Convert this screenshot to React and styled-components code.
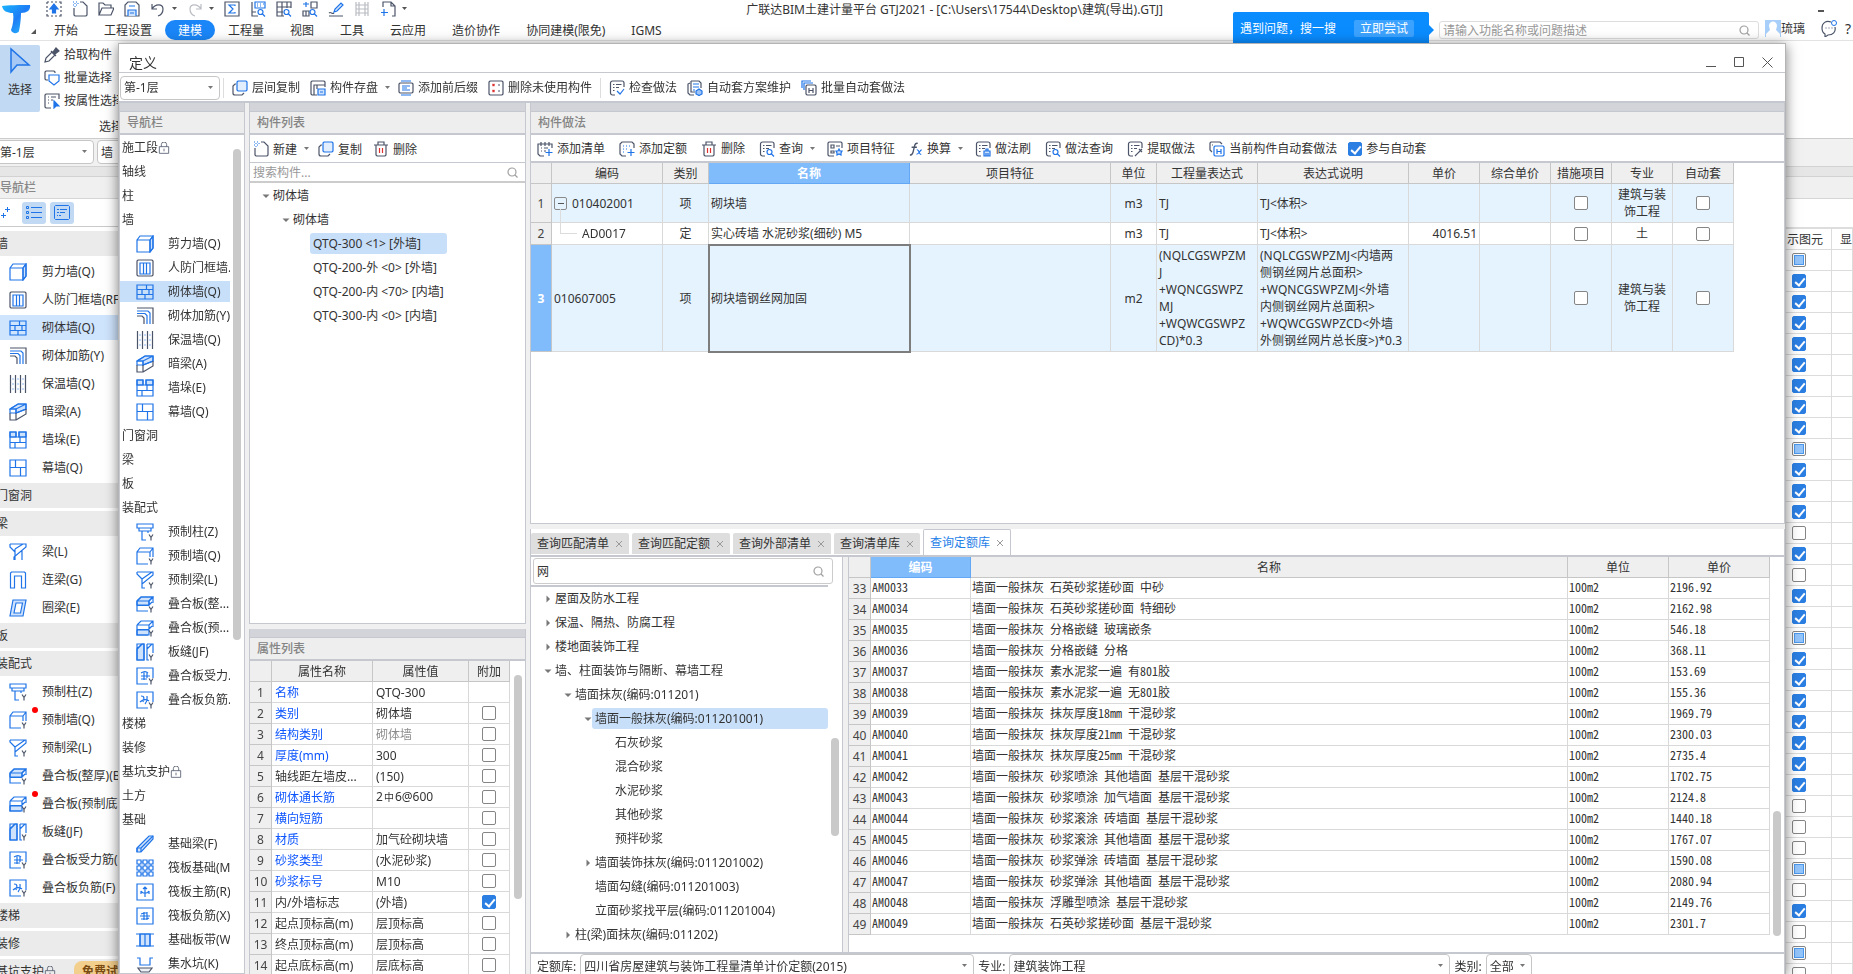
import React from 'react';
import styled, { createGlobalStyle } from 'styled-components';

const line = '#c5c8ce';
const blue = '#1f74e8';
const dark = '#4b5468';
const light = '#cfe2fb';

//icons : [colour, path, fill]
const K = dark;
const B = blue;
const L = light;
const G = '#b9bcc2';
const R = '#e03131';
const yMark = [K, 'M13 11.500l2 3 2-3M15 14.500v3'];
const sheet = [K, 'M6 15H3.500a2 2 0 0 1-2-2V3a2 2 0 0 1 2-2H13a2 2 0 0 1 2 2v4'];
const sheetLines = [K, 'M4 4.500h1.500M7 4.500h5.500M4 7.500h1.500M7 7.500h3M4 10.500h1.500'];

const icons = {
  //navigation
  shear: [[B, 'M14 5l3-4v12l-3 4z', L], [B, 'M1 5h13v12H1zM1 5l3-4h13v12l-3 4M14 5l3-4']],
  door: [[K, 'M2 1h14l1 1v14l-1 1H2l-1-1V2z'], [B, 'M4 4h10v11H4zM7.500 4v11M10.500 4v11']],
  brick: [[B, 'M1 2h16v14H1zM1 6.500h16M1 11.500h16M10.500 2v4.500M6 6.500v5M13 6.500v5M9 11.500V16']],
  rebar: [[K, 'M1 1h16v16M1 9h5l2 2v6'], [B, 'M1 4h11l2 2v11M1 6.500h8l2 2V17']],
  insul: [[K, 'M1.500 0v18M6.500 0v18M11.500 0v18M16.500 0v18'], [B, 'M3.500 4h1M8.500 4h1M13.500 4h1M3.500 9h1M8.500 9h1M13.500 9h1M3.500 14h1M8.500 14h1M13.500 14h1']],
  hidden: [[B, 'M1 6l8-5h8v5L7 10V6z', L], [B, 'M1 6l8-5h8v5L7 10M1 6h6l10-5M7 6v4H1V6'], [K, 'M1 10v7h6v-7M7 17l10-6V6']],
  pier: [[B, 'M1 1h6v5H1zM10 1h7v5h-7z', L], [B, 'M1 1h6v5h3V1h7v16H1zM1 6h16M1 11.500h16M11 6v5.500M6 11.500V17']],
  curtain: [[B, 'M1 1h16v16H1zM1 8.500h16M6.500 1v7.500M11.500 8.500V17']],
  beam: [[B, 'M1 1h16v3L5 14v3M1 1v3l5 5M6 6l8-5M6 6v11M13 8v9']],
  link: [[B, 'M1.500 17V2l1-1h13l1 1v15h-4V5h-7v12z']],
  ring: [[B, 'M4 1h13l-3 16H1z', L], [B, 'M7 4h6.500l-2 10H5z', '#fff']],
  pColumn: [[B, 'M1 1h16v4H1zM3 5v3h12V5M6 8v9h4M12 8v2'], yMark],
  pWall: [[B, 'M12 17H1V5l3-4h13v9M1 5h13l3-4M14 5v5'], yMark],
  pBeam: [[B, 'M1 1h16v3L6 13v4M1 1v2l5 5M6 8l10-7M6 8v9h3'], yMark],
  slabTop: [[B, 'M1 6l4-4h12l-4 4v4H1z', L], [B, 'M1 6l4-4h12v6M1 6h12l4-4M1 6v10h11M1 10.500h12M13 6v4M13 10l3-3'], yMark],
  slabLow: [[B, 'M1 11h12v5H1z', L], [B, 'M1 6l4-4h12v6M1 6h12l4-4M1 6v10h11M1 10.500h12M13 6v4M13 10l3-3'], yMark],
  seam: [[B, 'M1 6l5-5h2v16H1z', L], [B, 'M1 1h7v16H1zM11 1h6v9M11 1v16h2M1 6l5-5M11 6l5-5'], yMark],
  slabBar: [[B, 'M12 17H1V1h16v10M5 6c3-2 5-2 7 0M5 9h9M5 12h6M8 5v8M11 5v6'], yMark],
  slabNeg: [[B, 'M12 17H1V1h16v10M5 5c4 0 3 3 2 6M4 11c3-3 7-3 9-1M11 5c0 3 1 5-2 8'], yMark],
  fBeam: [[B, 'M1 13L13 1h4v3L5 17H1z', L], [B, 'M1 13h4v4M5 13L17 1M1 13v4']],
  raft: [[B, 'M1 1h4v4H1zM7 1h4v4H7zM13 1h4v4h-4zM1 7h4v4H1zM7 7h4v4H7zM13 7h4v4h-4zM1 13h4v4H1zM7 13h4v4H7zM13 13h4v4h-4zM5 3h2M11 3h2M5 9h2M11 9h2M5 15h2M11 15h2M3 5v2M9 5v2M15 5v2M3 11v2M9 11v2M15 11v2']],
  raftMain: [[B, 'M1 1h16v16H1zM9 4v10M5 8c2 3 6 3 8 0M7 6l2-2 2 2M5 8v3M13 8v3']],
  raftNeg: [[B, 'M1 1h16v16H1zM4 9h10M5 7l3-1h3M5 12h6l2-1M8 5v8M11 5v8']],
  strip: [[B, 'M4 3h10v12H4z', L], [B, 'M0 3h18M0 15h18M4 3v12M14 3v12M9 3v12']],
  sump: [[B, 'M1 3h3v7h10V3h3'], [K, 'M2 13h14l-3 4H5z', '#eef0f3']],
  lock: [[K, 'M2 7h14v10H2zM5 7V4a4 4 0 0 1 8 0v3M9 10v4']],

  //toolbars
  layers: [[K, 'M4 4H3L1 6v7a2 2 0 0 0 2 2h7l2-2'], [B, 'M6 1h8l1 1v8l-1 1H6l-1-1V2z', '#e2eefd']],
  save: [[K, 'M7 15H2l-1-1V2l1-1h12l1 1v5M4 15V5h11M7 5v4'], [B, 'M8 9h7v6H8zM10 12h3', L]],
  prefix: [[K, 'M2 3h12l1 1v8l-1 1H2l-1-1V4z'], [B, 'M3 1h10M3 15h10M4 6h8M4 8h5M4 10h8']],
  unused: [[K, 'M2 1h12l1 1v12l-1 1H2l-1-1V2zM10 5h2M10 11h2'], [R, 'M4.500 4l2 2M6.500 4l-2 2M4.500 10l2 2M6.500 10l-2 2']],
  check: [sheet, sheetLines, [B, 'M8 11l3 3 4-5']],
  maintain: [[K, 'M7 15H3l-2-2V4l2-1M4 1h8l2 2v5M4 1v11h4'], [B, 'M6 4h6M6 7h6M6 10h2'], [B, 'M12 9l3 2v3l-3 1.500L9 14v-3z', '#9cc4f6']],
  batch: [[B, 'M1 8V1h9M3 10V3h9'], [K, 'M6 5h8l1 1v8l-1 1H6l-1-1V6zM8 8v5M12 8v5M8 10.500h4']],
  newDoc: [[K, 'M8 1h3l4 4v9l-1 1H3l-1-1V7'], [B, 'M1 1h1M4 1h1M2.500 2.500h1M1 4h1M4 4h1M5.500 2.500h1M2.500 5.500h1']],
  trash: [[K, 'M1 4h14M5 4V1h6v3M3 4v10l1 1h8l1-1V4'], [R, 'M6.500 7v5M9.500 7v5']],
  addList: [[K, 'M7 15H3l-2-2V3h14v4M4 1v4M8 1v4M12 1v4M4 7h1M7 7h4M4 10h1M7 10h2'], [B, 'M12 8v7M8.500 11.500h7']],
  addQuota: [[K, 'M7 15H3l-2-2V3l2-2h10l2 2v4'], [B, 'M4 5h1M7 5h1M10 5h1M4 8h1M7 8h1M4 11h1M12 8v7M8.500 11.500h7']],
  query: [sheet, sheetLines, [B, 'M13 11a2.500 2.500 0 1 0-5 0 2.500 2.500 0 0 0 5 0M12.500 13l2.500 2.500']],
  feature: [[K, 'M7 15H2l-1-1V2l1-1h12l1 1v5M4 4h3v3H4zM9 5h4M4 10h3v2H4z'], [B, 'M12 8l1 2h2l-1 2v2l-2-1-2 1v-2l-1-2h2z', L]],
  brush: [sheet, sheetLines, [B, 'M9 10h6v5H9zM11 10V8h2v2M11 12v3M13 12v3', L]],
  extract: [sheet, sheetLines, [K, 'M8 15l5-5M12 8l3 3M13 10l2-2']],
  current: [[K, 'M3 11L1 9V2l1-1h9l2 2M3 4h1'], [B, 'M6 5h8l1 1v8l-1 1H6l-1-1V6zM8 8v5M12 8v5M8 10.500h4']],

  //quick access
  upload: [[K, 'M1 1h2M5 1h2M9 1h2M13 1h2v2M15 5v2M15 9v2M15 13v2h-2M11 15H9M7 15H5M3 15H1v-2M1 11V9M1 7V5M1 3V1'], [B, 'M8 3l4 5H9.500v4h-3V8H4z', B]],
  open: [[K, 'M1 14V2h4l2 2h6v3M1 14l3-7h12l-3 7z']],
  disk: [[K, 'M1 15V4l3-3h8l3 3v11z'], [B, 'M4 15V9h8v6M5 5h6M6 12h4', L]],
  undo: [[K, 'M2 3v5h5M2 8c3-5 11-6 11 0 0 3-2 6-5 7']],
  redo: [[G, 'M14 3v5H9M14 8C11 3 3 2 3 8c0 3 2 6 5 7']],
  sigma: [[K, 'M1 1h14v14H1z'], [B, 'M11 5V4H5l4 4-4 4h6v-1']],
  calc: [[K, 'M2 1v14h6M2 11h4'], [B, 'M5 1h10v6H5zM7 3h1M10 3h1M13 3h1M7 5h1M10 5h1M13 11a2.500 2.500 0 1 0-5 0 2.500 2.500 0 0 0 5 0M12.500 13l2.500 2.500']],
  gridFind: [[K, 'M8 15H1V1h14v6M1 6h14M1 11h6M6 1v14M11 1v6'], [B, 'M13 11a2.500 2.500 0 1 0-5 0 2.500 2.500 0 0 0 5 0M12.500 13l2.500 2.500']],
  objFind: [[K, 'M9 1h6v6H9zM1 10h6v5H1zM4 10v5'], [B, 'M4 1v5M1 3h6M13 11a2.500 2.500 0 1 0-5 0 2.500 2.500 0 0 0 5 0M12.500 13l2.500 2.500']],
  pen: [[K, 'M1 15h14M1 12c2-2 3 2 5 0'], [B, 'M6 11l1-3 6-6 2 2-6 6z', L]],
  ladder: [[G, 'M2 1v14M14 1v14M5 1v14M11 1v14M2 4h12M2 8h12M2 12h12']],
  addDoc: [[K, 'M3 6V1h8l4 4v10h-3M11 1v4h4'], [B, 'M4 8v7M1 11.500h7']],

  //select group
  picker: [[K, 'M1 15l1-4 6-6 3 3-6 6z'], [K, 'M7 4l5 5M9 5l3-4 3 3-4 3z', K]],
  batchPick: [[K, 'M4 10H2l-1-1V2l1-1h8l1 1v1'], [B, 'M5 5h10v6l-5 4-5-4z', '#fff']],
  attrPick: [[K, 'M7 15H2l-1-1V2l1-1h13v5M4 4h1M7 4h5M4 7h1M7 7h2M4 10h1'], [B, 'M10 8l5 5h-3l-2 2z', B]],
};

const Svg = styled.svg`
  flex: none;
  display: block;
`;

const Icon = ({ name, size = 16, box = 16 }) => (
  <Svg width={size} height={size} viewBox={`0 0 ${box} ${box}`} fill="none" strokeWidth="1.2" aria-hidden="true">
    {icons[name].map(([stroke, d, fill], i) => (
      <path key={i} d={d} stroke={stroke} fill={fill || 'none'} />
    ))}
  </Svg>
);

const Caret = ({ color = '#777' }) => (
  <Svg width="7" height="4" viewBox="0 0 7 4" aria-hidden="true">
    <path d="M1 0h5L3.500 3z" fill={color} />
  </Svg>
);

const Twist = ({ open }) => (
  <Svg width="8" height="8" viewBox="0 0 8 8" aria-hidden="true">
    <path d={open ? 'M0.500 2.500h7L4 6z' : 'M2.500 0.500v7L6 4z'} fill="#777" />
  </Svg>
);

const Lens = () => (
  <Svg width="11" height="11" viewBox="0 0 11 11" fill="none" stroke="#a0a0a0" strokeWidth="1.2" aria-hidden="true">
    <circle cx="5" cy="5" r="4" />
    <path d="M8 8l2.500 2.500" />
  </Svg>
);

const Fx = () => (
  <Svg width="14" height="16" viewBox="0 0 16 16" fill="none" aria-hidden="true">
    <path d="M1 15c2 0 3-1 3.500-3L6.500 4C7 2 8 1 10 1.500M3 6h6" stroke={dark} strokeWidth="1.500" />
    <path d="M9 9c3-1 2 6 5 5M14.500 9c-2 0-3 5-6 5" stroke={blue} strokeWidth="1.400" />
  </Svg>
);

const Global = createGlobalStyle`
  * { box-sizing: border-box; }
  body {
    margin: 0;
    overflow: hidden;
    background: #fff;
    color: #333;
    font: 12px/17px "Noto Sans", "Noto Sans CJK SC", sans-serif;
  }
  button, input, select {
    font: inherit;
    color: inherit;
  }
  button {
    border: 0;
    padding: 0;
    background: none;
    white-space: nowrap;
  }
`;

const App = () => (
  <>
    <Global />
    <Main>
      <Header />
      <Ribbon />
      <FloorBar>
        <Combo $width={98}>
          <select aria-label="楼层"><option>第-1层</option></select>
          <Caret />
        </Combo>
        <Combo $width={90}>
          <select aria-label="构件类型"><option>墙</option></select>
        </Combo>
      </FloorBar>
      <Docks>
        <LeftDock />
        <RightDock />
      </Docks>
    </Main>
    <DefineDialog />
  </>
);

//Header
const quick = ['upload', 'newDoc', 'open', 'disk', 'undo', '>', 'redo', '>', 'sigma', 'calc', 'gridFind', 'objFind', 'pen', 'ladder', 'addDoc', '>'];
const menus = ['开始', '工程设置', '建模', '工程量', '视图', '工具', '云应用', '造价协作', '协同建模(限免)', 'IGMS'];

const Header = () => (
  <Head>
    <Logo>
      <svg width="30" height="32" viewBox="0 0 30 32" aria-hidden="true">
        <defs>
          <linearGradient id="logo" x1="0" y1="0" x2="1" y2="1">
            <stop offset="0" stopColor="#19b5ff" />
            <stop offset="0.5" stopColor="#1e7df5" />
            <stop offset="1" stopColor="#27c3ff" />
          </linearGradient>
        </defs>
        <path d="M1 4c4-1 20-1 28-1 1 5-3 8-9 8 0 6-1 13-2 18-1 3-7 3-8-1 2-5 3-12 2-17C6 11 2 9 1 4z" fill="url(#logo)" />
      </svg>
      <svg width="5" height="5" viewBox="0 0 5 5" aria-hidden="true"><path d="M5 0v5H0z" fill="#555" /></svg>
    </Logo>
    <HeadMiddle>
      <TitleRow>
        <Quick>
          {quick.map((q, i) => (q === '>'
            ? <Caret key={i} color="#555" />
            : <button key={i} aria-label={q}><Icon name={q} /></button>))}
        </Quick>
        <AppTitle>广联达BIM土建计量平台 GTJ2021 - [C:\Users\17544\Desktop\建筑(导出).GTJ]</AppTitle>
      </TitleRow>
      <Menus>
        {menus.map((m) => <MenuButton key={m} $active={m === '建模'}>{m}</MenuButton>)}
      </Menus>
    </HeadMiddle>
    <HeadRight>
      <Minimise aria-label="最小化" />
      <HelpRow>
        <Banner>
          遇到问题，搜一搜
          <TryButton>立即尝试</TryButton>
        </Banner>
        <HelpSearch>
          <input aria-label="搜索功能" placeholder="请输入功能名称或问题描述" />
          <Lens />
        </HelpSearch>
        <User>
          <svg width="16" height="17" viewBox="0 0 16 17" aria-hidden="true">
            <path d="M0 0h16v17H0z" fill="#a8cffa" />
            <path d="M4 6c0-6 8-6 8 0l-1 4 4 4v3H1v-3l4-4z" fill="#fff" />
          </svg>
          琉璃
        </User>
        <svg width="16" height="17" viewBox="0 0 16 17" fill="none" aria-hidden="true">
          <path d="M10 2C5 0 1 3 1 8c0 3 1 5 3 6v3l3-2c5 0 8-3 7-8" stroke={dark} strokeWidth="1.200" />
          <path d="M4.500 8h1M7.500 8h1M10.500 8h1" stroke={dark} strokeWidth="1.200" />
          <circle cx="13" cy="3" r="2.500" stroke={blue} />
        </svg>
        <Help>?</Help>
      </HelpRow>
    </HeadRight>
  </Head>
);

const Ribbon = () => (
  <RibbonBar>
    <SelectButton>
      <svg width="22" height="28" viewBox="0 0 22 28" aria-hidden="true">
        <path d="M2 2v23l6-7h12z" fill="#a5c8f5" stroke={blue} strokeWidth="1.500" />
      </svg>
      选择
    </SelectButton>
    <SelectTools>
      <ToolButton><Icon name="picker" />拾取构件</ToolButton>
      <ToolButton><Icon name="batchPick" />批量选择</ToolButton>
      <ToolButton><Icon name="attrPick" />按属性选择</ToolButton>
      <GroupName>选择</GroupName>
    </SelectTools>
  </RibbonBar>
);

//Docks behind the dialog
const dockNav = [
  ['墙'],
  ['剪力墙(Q)', 'shear'], ['人防门框墙(RF)', 'door'], ['砌体墙(Q)', 'brick'], ['砌体加筋(Y)', 'rebar'], ['保温墙(Q)', 'insul'],
  ['暗梁(A)', 'hidden'], ['墙垛(E)', 'pier'], ['幕墙(Q)', 'curtain'],
  ['门窗洞'],
  ['梁'],
  ['梁(L)', 'beam'], ['连梁(G)', 'link'], ['圈梁(E)', 'ring'],
  ['板'],
  ['装配式'],
  ['预制柱(Z)', 'pColumn'], ['预制墙(Q)', 'pWall', true], ['预制梁(L)', 'pBeam'], ['叠合板(整厚)(B)', 'slabTop'],
  ['叠合板(预制底', 'slabLow', true], ['板缝(JF)', 'seam'], ['叠合板受力筋(', 'slabBar'], ['叠合板负筋(F)', 'slabNeg'],
  ['楼梯'],
  ['装修'],
];

const LeftDock = () => (
  <LeftPanel>
    <DockStrip />
    <DockTitle $inset={8}>导航栏</DockTitle>
    <DockTools>
      <svg width="9" height="11" viewBox="0 0 9 11" stroke={blue} aria-hidden="true"><path d="M6.500 0v5M4 2.500h5M2.500 6v5M0 8.500h5" /></svg>
      <ViewButton aria-label="列表">
        <svg width="16" height="14" viewBox="0 0 16 14" fill="none" stroke={blue} aria-hidden="true">
          <path d="M.5.5h2v2h-2zM.5 5.500h2v2h-2zM.5 10.500h2v2h-2zM5 1.500h11M5 6.500h11M5 11.500h11" />
        </svg>
      </ViewButton>
      <ViewButton aria-label="卡片">
        <svg width="16" height="16" viewBox="0 0 16 16" fill="none" stroke={blue} aria-hidden="true">
          <path d="M1.500.5h13l1 1v12l-1 1h-13l-1-1v-12zM3 4.500h2M6 4.500h7M3 7.500h2M6 7.500h5M3 10.500h1M5 10.500h2" />
        </svg>
      </ViewButton>
    </DockTools>
    {dockNav.map(([text, icon, fresh], i) => (icon
      ? (
        <DockItem key={i} $active={icon === 'brick'}>
          <Icon name={icon} size={18} box={18} />
          {text}
          {fresh && <Fresh />}
        </DockItem>
      )
      : <DockGroup key={i}>{text}</DockGroup>))}
    <DockGroup>基坑支护<Icon name="lock" size={12} box={18} /><Trial>免费试用</Trial></DockGroup>
  </LeftPanel>
);

//p partly shown, y shown, n hidden
const shown = 'pyyyyyyyypyyynynyypyyyyyyynnnpnynpn'.split('');

const RightDock = () => (
  <RightPanel>
    <DockStrip />
    <DockTitle />
    <DockGap />
    <ShownTable>
      <thead><tr><th>示图元</th><th>显示</th></tr></thead>
      <tbody>
        {shown.map((s, i) => (
          <tr key={i}>
            <td><Check type="checkbox" aria-label={`图元 ${i + 1}`} defaultChecked={s === 'y'} $partial={s === 'p'} /></td>
            <td />
          </tr>
        ))}
      </tbody>
    </ShownTable>
  </RightPanel>
);

//Dialog
const nav = [
  ['施工段', 'lock'], ['轴线'], ['柱'], ['墙'],
  ['剪力墙(Q)', 'shear'], ['人防门框墙...', 'door'], ['砌体墙(Q)', 'brick'], ['砌体加筋(Y)', 'rebar'], ['保温墙(Q)', 'insul'],
  ['暗梁(A)', 'hidden'], ['墙垛(E)', 'pier'], ['幕墙(Q)', 'curtain'],
  ['门窗洞'], ['梁'], ['板'], ['装配式'],
  ['预制柱(Z)', 'pColumn'], ['预制墙(Q)', 'pWall'], ['预制梁(L)', 'pBeam'], ['叠合板(整...', 'slabTop'], ['叠合板(预...', 'slabLow'],
  ['板缝(JF)', 'seam'], ['叠合板受力...', 'slabBar'], ['叠合板负筋...', 'slabNeg'],
  ['楼梯'], ['装修'], ['基坑支护', 'lock'], ['土方'], ['基础'],
  ['基础梁(F)', 'fBeam'], ['筏板基础(M)', 'raft'], ['筏板主筋(R)', 'raftMain'], ['筏板负筋(X)', 'raftNeg'], ['基础板带(W)', 'strip'], ['集水坑(K)', 'sump'],
];

const DefineDialog = () => (
  <Dialog role="dialog" aria-label="定义">
    <DialogTitle>
      定义
      <WindowButtons>
        <button aria-label="最小化"><svg width="11" height="11" viewBox="0 0 11 11" stroke="#555" fill="none"><path d="M0 9.500h10" /></svg></button>
        <button aria-label="最大化"><svg width="11" height="11" viewBox="0 0 11 11" stroke="#555" fill="none"><path d="M.5.5h9v9h-9z" /></svg></button>
        <button aria-label="关闭"><svg width="11" height="11" viewBox="0 0 11 11" stroke="#555" fill="none"><path d="M.5.5l10 10M10.500.5l-10 10" /></svg></button>
      </WindowButtons>
    </DialogTitle>
    <DialogTools>
      <Combo $width={100}>
        <select aria-label="楼层"><option>第-1层</option></select>
        <Caret />
      </Combo>
      <Divider />
      <ToolButton><Icon name="layers" />层间复制</ToolButton>
      <ToolButton><Icon name="save" />构件存盘<Caret /></ToolButton>
      <ToolButton><Icon name="prefix" />添加前后缀</ToolButton>
      <ToolButton><Icon name="unused" />删除未使用构件</ToolButton>
      <Divider />
      <ToolButton><Icon name="check" />检查做法</ToolButton>
      <ToolButton><Icon name="maintain" />自动套方案维护</ToolButton>
      <ToolButton><Icon name="batch" />批量自动套做法</ToolButton>
    </DialogTools>
    <Panels>
      <Panel>
        <Strip />
        <PanelTitle>导航栏</PanelTitle>
        <NavBody>
          <NavList>
            {nav.map(([text, icon]) => (
              <NavRow key={text} $item={icon && icon !== 'lock'} $active={text === '砌体墙(Q)'}>
                {icon && icon !== 'lock' && <Icon name={icon} size={18} box={18} />}
                {text}
                {icon === 'lock' && <Icon name="lock" size={12} box={18} />}
              </NavRow>
            ))}
          </NavList>
          <Thumb $top={14} $height={491} />
        </NavBody>
      </Panel>
      <Column>
        <ComponentList />
        <Properties />
      </Column>
      <Column>
        <Methods />
        <QueryPanel />
      </Column>
    </Panels>
  </Dialog>
);

const components = ['QTQ-300 <1> [外墙]', 'QTQ-200-外 <0> [外墙]', 'QTQ-200-内 <70> [内墙]', 'QTQ-300-内 <0> [内墙]'];

const ComponentList = () => (
  <Panel $grow>
    <Strip />
    <PanelTitle>构件列表</PanelTitle>
    <ListTools>
      <ToolButton><Icon name="newDoc" />新建<Caret /></ToolButton>
      <ToolButton><Icon name="layers" />复制</ToolButton>
      <ToolButton><Icon name="trash" />删除</ToolButton>
    </ListTools>
    <ListSearch>
      <input aria-label="搜索构件" placeholder="搜索构件..." />
      <Lens />
    </ListSearch>
    <ListTree>
      <TreeRow $depth={0}><Twist open /><span>砌体墙</span></TreeRow>
      <TreeRow $depth={1}><Twist open /><span>砌体墙</span></TreeRow>
      {components.map((c, i) => (
        <TreeRow key={c} $depth={2} $leaf $active={i === 0}><span>{c}</span></TreeRow>
      ))}
    </ListTree>
  </Panel>
);

//name, value, name is a common property, value is grey, attach box
const properties = [
  ['名称', 'QTQ-300', true, false, null],
  ['类别', '砌体墙', true],
  ['结构类别', '砌体墙', true, true],
  ['厚度(mm)', '300', true],
  ['轴线距左墙皮...', '(150)'],
  ['砌体通长筋', <>2<Bar>中</Bar>6@600</>, true],
  ['横向短筋', '', true],
  ['材质', '加气砼砌块墙', true],
  ['砂浆类型', '(水泥砂浆)', true],
  ['砂浆标号', 'M10', true],
  ['内/外墙标志', '(外墙)', false, false, true],
  ['起点顶标高(m)', '层顶标高'],
  ['终点顶标高(m)', '层顶标高'],
  ['起点底标高(m)', '层底标高'],
];

function Bar({ children }) {
  return <RebarMark>{children}</RebarMark>;
}

const Properties = () => (
  <Panel $height={345}>
    <Strip />
    <PanelTitle>属性列表</PanelTitle>
    <Split>
      <Grid>
        <colgroup><col width="22" /><col width="101" /><col width="96" /><col width="41" /></colgroup>
        <thead><tr><th /><th>属性名称</th><th>属性值</th><th>附加</th></tr></thead>
        <tbody>
          {properties.map(([name, value, common, grey, attach = false], i) => (
            <tr key={name}>
              <RowNo>{i + 1}</RowNo>
              <Cell $pad={3} $color={common && '#0d55ff'}>{name}</Cell>
              <Cell $pad={3} $color={grey && '#8c8c8c'}>{value}</Cell>
              <Cell $align="center">
                {attach !== null && <Check type="checkbox" aria-label={`附加 ${name}`} defaultChecked={attach} />}
              </Cell>
            </tr>
          ))}
        </tbody>
      </Grid>
      <Thumb $top={14} $height={224} />
    </Split>
  </Panel>
);

const lines = (text) => text.split('\n').map((t, i) => <React.Fragment key={t}>{i > 0 && <br />}{t}</React.Fragment>);

const expr = '(NQLCGSWPZM\nJ\n+WQNCGSWPZ\nMJ\n+WQWCGSWPZ\nCD)*0.3';
const exprNote = '(NQLCGSWPZMJ<内墙两\n侧钢丝网片总面积>\n+WQNCGSWPZMJ<外墙\n内侧钢丝网片总面积>\n+WQWCGSWPZCD<外墙\n外侧钢丝网片总长度>)*0.3';

const methods = [
  { kind: '项', name: '砌块墙', unit: 'm3', expr: 'TJ', note: 'TJ<体积>', price: '', major: '建筑与装\n饰工程', tint: true },
  { kind: '定', name: '实心砖墙 水泥砂浆(细砂) M5', unit: 'm3', expr: 'TJ', note: 'TJ<体积>', price: '4016.51', major: '土' },
  { kind: '项', name: '砌块墙钢丝网加固', unit: 'm2', expr, note: exprNote, price: '', major: '建筑与装\n饰工程', tint: true, current: true },
];

const codes = [
  <CodeRow key="a"><Fold aria-label="折叠" />010402001</CodeRow>,
  <ChildCode key="b">AD0017</ChildCode>,
  '010607005',
];

function CodeRow({ children }) {
  return <CodeFlex>{children}</CodeFlex>;
}
function Fold(props) {
  return <FoldButton {...props}><svg width="6" height="1" aria-hidden="true"><path d="M0 0h6v1H0z" fill="#555" /></svg></FoldButton>;
}
function ChildCode({ children }) {
  return <ChildBox><Elbow />{children}</ChildBox>;
}

const Methods = () => (
  <Panel $grow>
    <Strip />
    <PanelTitle>构件做法</PanelTitle>
    <MethodTools>
      <ToolButton><Icon name="addList" />添加清单</ToolButton>
      <ToolButton><Icon name="addQuota" />添加定额</ToolButton>
      <ToolButton><Icon name="trash" />删除</ToolButton>
      <ToolButton><Icon name="query" />查询<Caret /></ToolButton>
      <ToolButton><Icon name="feature" />项目特征</ToolButton>
      <ToolButton><Fx />换算<Caret /></ToolButton>
      <ToolButton><Icon name="brush" />做法刷</ToolButton>
      <ToolButton><Icon name="query" />做法查询</ToolButton>
      <ToolButton><Icon name="extract" />提取做法</ToolButton>
      <ToolButton><Icon name="current" />当前构件自动套做法</ToolButton>
      <AutoLabel><Check type="checkbox" defaultChecked />参与自动套</AutoLabel>
    </MethodTools>
    <Grid>
      <colgroup>
        {[21, 111, 46, 201, 201, 46, 101, 151, 71, 71, 61, 61, 61].map((w, i) => <col key={i} width={w} />)}
      </colgroup>
      <thead>
        <tr>
          <th /><th>编码</th><th>类别</th><ActiveHead>名称</ActiveHead><th>项目特征</th><th>单位</th><th>工程量表达式</th>
          <th>表达式说明</th><th>单价</th><th>综合单价</th><th>措施项目</th><th>专业</th><th>自动套</th>
        </tr>
      </thead>
      <tbody>
        {methods.map((m, i) => (
          <MethodRow key={i} $tint={m.tint}>
            <RowNo $current={m.current}>{i + 1}</RowNo>
            <Cell>{codes[i]}</Cell>
            <Cell $align="center">{m.kind}</Cell>
            <Cell $focus={m.current}>{m.name}</Cell>
            <Cell />
            <Cell $align="center">{m.unit}</Cell>
            <Cell>{lines(m.expr)}</Cell>
            <Cell>{lines(m.note)}</Cell>
            <Cell $align="right">{m.price}</Cell>
            <Cell />
            <Cell $align="center"><Check type="checkbox" aria-label="措施项目" /></Cell>
            <Cell $align="center">{lines(m.major)}</Cell>
            <Cell $align="center"><Check type="checkbox" aria-label="自动套" /></Cell>
          </MethodRow>
        ))}
      </tbody>
    </Grid>
  </Panel>
);

const tabs = ['查询匹配清单', '查询匹配定额', '查询外部清单', '查询清单库', '查询定额库'];

//depth, text, open / closed / leaf
const chapters = [
  [0, '屋面及防水工程', false],
  [0, '保温、隔热、防腐工程', false],
  [0, '楼地面装饰工程', false],
  [0, '墙、柱面装饰与隔断、幕墙工程', true],
  [1, '墙面抹灰(编码:011201)', true],
  [2, '墙面一般抹灰(编码:011201001)', true],
  [3, '石灰砂浆'],
  [3, '混合砂浆'],
  [3, '水泥砂浆'],
  [3, '其他砂浆'],
  [3, '预拌砂浆'],
  [2, '墙面装饰抹灰(编码:011201002)', false],
  [2, '墙面勾缝(编码:011201003)'],
  [2, '立面砂浆找平层(编码:011201004)'],
  [1, '柱(梁)面抹灰(编码:011202)', false],
];

const quotas = [
  ['石英砂浆搓砂面 中砂', '2196.92'],
  ['石英砂浆搓砂面 特细砂', '2162.98'],
  ['分格嵌缝 玻璃嵌条', '546.18'],
  ['分格嵌缝 分格', '368.11'],
  ['素水泥浆一遍 有801胶', '153.69'],
  ['素水泥浆一遍 无801胶', '155.36'],
  ['抹灰厚度18mm 干混砂浆', '1969.79'],
  ['抹灰厚度21mm 干混砂浆', '2300.03'],
  ['抹灰厚度25mm 干混砂浆', '2735.4'],
  ['砂浆喷涂 其他墙面 基层干混砂浆', '1702.75'],
  ['砂浆喷涂 加气墙面 基层干混砂浆', '2124.8'],
  ['砂浆滚涂 砖墙面 基层干混砂浆', '1440.18'],
  ['砂浆滚涂 其他墙面 基层干混砂浆', '1767.07'],
  ['砂浆弹涂 砖墙面 基层干混砂浆', '1590.08'],
  ['砂浆弹涂 其他墙面 基层干混砂浆', '2080.94'],
  ['浮雕型喷涂 基层干混砂浆', '2149.76'],
  ['石英砂浆搓砂面 基层干混砂浆', '2301.7'],
];

const QueryPanel = () => (
  <Query>
    <Tabs>
      {tabs.map((t, i) => (
        <Tab key={t} $active={i === 4}>
          {t}
          <svg width="8" height="8" viewBox="0 0 8 8" stroke="#999" aria-hidden="true"><path d="M1 1l6 6M7 1L1 7" /></svg>
        </Tab>
      ))}
    </Tabs>
    <QueryBody>
      <Chapters>
        <ChapterSearch>
          <input aria-label="查询" defaultValue="网" />
          <Lens />
        </ChapterSearch>
        <Split>
          <ChapterTree>
            {chapters.map(([depth, text, open]) => (
              <TreeRow key={text} $depth={depth} $leaf={open === undefined} $active={text.includes('011201001')}>
                {open !== undefined && <Twist open={open} />}
                <span>{text}</span>
              </TreeRow>
            ))}
          </ChapterTree>
          <Thumb $top={153} $height={98} />
        </Split>
      </Chapters>
      <Quotas>
        <Grid $fill>
          <colgroup><col width="22" /><col width="100" /><col /><col width="101" /><col width="101" /></colgroup>
          <thead><tr><th /><ActiveHead>编码</ActiveHead><th>名称</th><th>单位</th><th>单价</th></tr></thead>
          <tbody>
            {quotas.map(([name, price], i) => (
              <tr key={name}>
                <RowNo>{i + 33}</RowNo>
                <Cell $mono>AM00{i + 33}</Cell>
                <Cell $mono>墙面一般抹灰 {name}</Cell>
                <Cell $mono>100m2</Cell>
                <Cell $mono>{price}</Cell>
              </tr>
            ))}
          </tbody>
        </Grid>
        <Thumb $top={254} $height={125} />
      </Quotas>
    </QueryBody>
    <Footer>
      <label htmlFor="library">定额库:</label>
      <Combo $width={394}>
        <select id="library"><option>四川省房屋建筑与装饰工程量清单计价定额(2015)</option></select>
        <Caret />
      </Combo>
      <label htmlFor="major">专业:</label>
      <Combo $width={441}>
        <select id="major"><option>建筑装饰工程</option></select>
        <Caret />
      </Combo>
      <label htmlFor="kind">类别:</label>
      <Combo $width={46}>
        <select id="kind"><option>全部</option></select>
        <Caret />
      </Combo>
    </Footer>
  </Query>
);

//Styled Components
const Main = styled.div`
  display: flex;
  flex-direction: column;
  height: 100vh;
  overflow: hidden;
`;
const Head = styled.header`
  flex: none;
  display: flex;
  height: 41px;
  border-bottom: 1px solid #e3e3e3;
`;
const Logo = styled.div`
  display: flex;
  align-items: flex-end;
  width: 41px;
  padding: 0 0 6px 1px;
`;
const HeadMiddle = styled.div`
  flex: 1;
  min-width: 0;
`;
const TitleRow = styled.div`
  display: flex;
  align-items: center;
  justify-content: space-between;
  height: 20px;
  padding: 0 70px 2px 5px;
`;
const Quick = styled.div`
  display: flex;
  align-items: center;
  gap: 10px;
  > svg { margin: 0 -1px 0 -5px; }
`;
const AppTitle = styled.div`
  white-space: nowrap;
`;
const Menus = styled.nav`
  display: flex;
`;
const MenuButton = styled.button`
  height: 20px;
  padding: 0 13px;
  border-radius: 10px;
  ${(p) => p.$active && 'background: #1a86f8; color: #fff;'}
`;
const HeadRight = styled.div`
  flex: none;
  width: 620px;
`;
const Minimise = styled.button`
  display: block;
  width: 6px;
  height: 2px;
  margin: 10px 29px 8px auto;
  background: #555;
`;
const HelpRow = styled.div`
  display: flex;
  align-items: flex-start;
  > svg { flex: none; margin-left: 16px; }
`;
const Banner = styled.div`
  position: relative;
  flex: none;
  display: flex;
  align-items: center;
  gap: 18px;
  width: 196px;
  height: 33px;
  margin: -8px 10px 0 0;
  padding-left: 7px;
  background: #0a8cff;
  color: #fff;
  border-radius: 2px;
  &::after {
    content: '';
    position: absolute;
    top: 13px;
    left: 100%;
    border: 5px solid transparent;
    border-left-color: #0a8cff;
    border-right: 0;
  }
`;
const TryButton = styled.button`
  padding: 0 6px;
  border-radius: 2px;
  background: #3ba3ff;
`;
const Field = styled.div`
  display: flex;
  align-items: center;
  background: #fff;
  border: 1px solid #ccc;
  border-radius: 3px;
  input {
    flex: 1;
    min-width: 0;
    padding: 0 3px;
    border: 0;
    outline: 0;
    background: none;
  }
  input::placeholder { color: #999; }
`;
const HelpSearch = styled(Field)`
  flex: none;
  width: 320px;
  height: 18px;
  margin-top: 1px;
  padding-right: 8px;
  border-color: #ddd;
`;
const User = styled.div`
  flex: none;
  display: flex;
  align-items: center;
  margin-left: 6px;
`;
const Help = styled.span`
  margin-left: 8px;
  font-size: 14px;
`;
const RibbonBar = styled.div`
  flex: none;
  display: flex;
  height: 97px;
  padding-top: 4px;
`;
const SelectButton = styled.button`
  display: flex;
  flex-direction: column;
  align-items: center;
  gap: 6px;
  width: 40px;
  height: 67px;
  padding-top: 2px;
  background: #c1d9f2;
  border-radius: 0 2px 2px 0;
`;
const SelectTools = styled.div`
  display: flex;
  flex-direction: column;
  width: 130px;
  margin-top: -2px;
  padding-left: 4px;
`;
const ToolButton = styled.button`
  flex: none;
  display: flex;
  align-items: center;
  gap: 4px;
  height: 23px;
  > svg:last-child:not(:first-child) { margin: 0 -3px 0 2px; }
`;
const GroupName = styled.div`
  padding: 6px 0 0 55px;
`;
const FloorBar = styled.div`
  flex: none;
  display: flex;
  align-items: flex-start;
  gap: 3px;
  height: 28px;
  margin-left: -8px;
  padding: 1px 0 0 4px;
  background: #f1f1f1;
  border-top: 1px solid #ccc;
`;
const Combo = styled.div`
  flex: none;
  display: flex;
  align-items: center;
  width: ${(p) => p.$width}px;
  height: 24px;
  padding-right: 5px;
  background: #fff;
  border: 1px solid #c6c6c6;
  border-radius: 4px;
  select {
    flex: 1;
    min-width: 0;
    padding: 0 3px;
    border: 0;
    outline: 0;
    background: none;
    appearance: none;
  }
`;
const Docks = styled.div`
  flex: 1;
  display: flex;
  justify-content: space-between;
  min-height: 0;
`;
const LeftPanel = styled.div`
  width: 127px;
  margin-left: -8px;
  overflow: hidden;
`;
const RightPanel = styled.div`
  width: 78px;
`;
const DockStrip = styled.div`
  height: 11px;
  background: #e6e6e6;
  border: 1px solid #d2d2d2;
  border-width: 1px 0;
`;
const DockTitle = styled.div`
  height: 22px;
  padding: 2px 0 0 ${(p) => p.$inset || 0}px;
  background: #f0f0f0;
  border-bottom: 1px solid #d6d6d6;
  color: #888;
  font-weight: 500;
`;
const DockTools = styled.div`
  display: flex;
  align-items: center;
  gap: 4px;
  height: 28px;
  margin-bottom: 4px;
  padding-left: 9px;
  border-bottom: 1px solid #c9c9c9;
  > svg { margin-right: 8px; }
`;
const ViewButton = styled.button`
  display: flex;
  align-items: center;
  justify-content: center;
  width: 24px;
  height: 22px;
  border-radius: 3px;
  background: #c1d9f2;
`;
const DockRow = styled.div`
  display: flex;
  align-items: center;
  height: 25px;
  margin-bottom: 3px;
  white-space: nowrap;
`;
const DockGroup = styled(DockRow)`
  padding-left: 4px;
  background: #ebebeb;
`;
const DockItem = styled(DockRow)`
  position: relative;
  gap: 15px;
  padding-left: 17px;
  ${(p) => p.$active && 'background: #cfe4fd;'}
`;
const Fresh = styled.i`
  position: absolute;
  top: 0;
  left: 40px;
  width: 6px;
  height: 6px;
  border-radius: 50%;
  background: #f00;
`;
const Trial = styled.span`
  margin-left: 18px;
  padding: 2px 8px;
  border-radius: 8px 0 0 0;
  background: #f3cf8e;
  color: #7a4b12;
  font-weight: bold;
`;
const DockGap = styled.div`
  height: 30px;
  border-bottom: 2px solid #ddd;
`;
const Check = styled.input`
  appearance: none;
  flex: none;
  display: inline-block;
  position: relative;
  width: 14px;
  height: 14px;
  margin: 0;
  vertical-align: middle;
  background: #fff;
  border: 1px solid #858585;
  border-radius: 2px;
  &:checked {
    background: #2b7fe3;
    border-color: #2b7fe3;
  }
  &:checked::after {
    content: '';
    position: absolute;
    top: 1px;
    left: 4px;
    width: 4px;
    height: 8px;
    border: solid #fff;
    border-width: 0 2px 2px 0;
    transform: rotate(40deg);
  }
  ${(p) => p.$partial && `
    &::after {
      content: '';
      position: absolute;
      inset: 1px;
      background: #93c4fa;
      border: 1px solid #4a98ee;
    }
  `}
`;
const ShownTable = styled.table`
  width: 100%;
  border-spacing: 0;
  table-layout: fixed;
  th, td {
    height: 21px;
    padding: 0 0 0 17px;
    border: solid #dcdcdc;
    border-width: 0 1px 1px 0;
    font-weight: normal;
    text-align: left;
    line-height: 17px;
    overflow: hidden;
    white-space: nowrap;
  }
  th { padding-left: 8px; }
  th:first-child { width: 57px; padding-left: 12px; }
  td input { display: block; }
`;
const Dialog = styled.div`
  position: fixed;
  inset: 43px 67px 0 118px;
  display: flex;
  flex-direction: column;
  overflow: hidden;
  background: #fff;
  border: 1px solid #b4b4b4;
  border-bottom: 0;
  box-shadow: 0 2px 12px rgba(0, 0, 0, 0.5);
`;
const DialogTitle = styled.div`
  flex: none;
  display: flex;
  justify-content: space-between;
  height: 29px;
  padding: 10px 12px 0 10px;
  border-bottom: 1px solid ${line};
  font-size: 14px;
`;
const WindowButtons = styled.div`
  display: flex;
  gap: 17px;
  padding-top: 3px;
  button { height: 11px; }
  svg { display: block; }
`;
const DialogTools = styled.div`
  flex: none;
  display: flex;
  align-items: center;
  gap: 10px;
  height: 30px;
  padding: 1px 0 0 1px;
  border-bottom: 2px solid ${line};
  > ${Combo} { margin-right: -5px; }
`;
const Divider = styled.div`
  width: 1px;
  height: 20px;
  margin: 0 -2px;
  background: #ddd;
`;
const Panels = styled.div`
  flex: 1;
  display: grid;
  min-height: 0;
  grid-template-columns: 126px 277px minmax(0, 1fr);
  grid-template-rows: minmax(0, 1fr);
  gap: 4px;
  background: #f0f0f0;
`;
const Column = styled.div`
  display: flex;
  flex-direction: column;
  gap: 5px;
  min-height: 0;
`;
const Panel = styled.section`
  display: flex;
  flex-direction: column;
  min-height: 0;
  overflow: hidden;
  background: #fff;
  border: 1px solid ${line};
  border-top: 0;
  ${(p) => p.$grow && 'flex: 1;'}
  ${(p) => p.$height && `flex: none; height: ${p.$height}px; border-bottom: 0;`}
`;
const Strip = styled.div`
  flex: none;
  height: 9px;
  background: #d3d4d9;
  border-bottom: 1px solid ${line};
`;
const PanelTitle = styled.h2`
  flex: none;
  height: 23px;
  margin: 0;
  padding: 2px 7px;
  background: #eee;
  border-bottom: 2px solid ${line};
  color: #848484;
  font-size: 12px;
  font-weight: 500;
`;
const NavBody = styled.div`
  display: flex;
  align-items: flex-start;
  min-height: 0;
`;
const NavList = styled.div`
  flex: none;
  display: flex;
  flex-direction: column;
  width: 110px;
  padding-top: 1px;
`;
const NavRow = styled.button`
  flex: none;
  display: flex;
  align-items: center;
  height: 21px;
  margin: 1px 0 2px;
  overflow: hidden;
  padding-left: ${(p) => (p.$item ? 16 : 2)}px;
  gap: ${(p) => (p.$item ? 14 : 0)}px;
  ${(p) => p.$active && 'background: #c8dff9;'}
`;
const Thumb = styled.div`
  flex: none;
  width: 8px;
  height: ${(p) => p.$height}px;
  margin: ${(p) => p.$top}px 3px 0 auto;
  border-radius: 4px;
  background: #c9c9c9;
`;
const ListTools = styled.div`
  flex: none;
  display: flex;
  align-items: center;
  gap: 11px;
  height: 28px;
  padding: 1px 0 0 3px;
  border-bottom: 1px solid ${line};
`;
const ListSearch = styled(Field)`
  flex: none;
  height: 20px;
  padding-right: 7px;
  border-width: 0 0 2px;
  border-radius: 0;
`;
const TreeRow = styled.button`
  flex: none;
  display: flex;
  align-items: center;
  height: 21px;
  margin: 1px 0 2px;
  padding-left: ${(p) => 12 + p.$depth * 20 + (p.$leaf ? 8 : 0)}px;
  span {
    flex: 1;
    height: 21px;
    padding: 2px 3px;
    border-radius: 3px;
    text-align: left;
    ${(p) => p.$active && 'background: #c8dff9;'}
  }
`;
const ListTree = styled.div`
  display: flex;
  flex-direction: column;
  width: max-content;
  padding-top: 1px;
`;
const Split = styled.div`
  flex: 1;
  display: flex;
  align-items: flex-start;
  min-height: 0;
  overflow: hidden;
`;
const Grid = styled.table`
  flex: ${(p) => (p.$fill ? '1' : 'none')};
  align-self: flex-start;
  width: ${(p) => (p.$fill ? 'auto' : '1px')};
  table-layout: fixed;
  border-spacing: 0;
  th {
    height: 21px;
    padding: 0;
    background: #efefef;
    border: solid #c6c6c6;
    border-width: 0 1px 1px 0;
    font-weight: normal;
    white-space: nowrap;
  }
`;
const ActiveHead = styled.th`
  && {
    background: #80bbfc;
    border-color: #62a8f5;
    color: #fff;
    font-weight: bold;
  }
`;
const Cell = styled.td`
  height: 21px;
  padding: ${(p) => (p.$pad ? `0 ${p.$pad}px` : '0 2px')};
  border: solid #d9d9d9;
  border-width: 0 1px 1px 0;
  text-align: ${(p) => p.$align || 'left'};
  color: ${(p) => p.$color || 'inherit'};
  white-space: nowrap;
  ${(p) => p.$mono && 'font-family: "Noto Sans Mono CJK SC", "Noto Sans CJK SC", monospace; line-height: 16px; padding: 0 1px 2px;'}
  ${(p) => p.$focus && 'outline: 2px solid #7d7d7d; outline-offset: -1px;'}
  input { display: block; margin: 0 auto; }
`;
const RowNo = styled.td`
  height: 21px;
  padding: 0;
  background: ${(p) => (p.$current ? '#80bbfc' : '#efefef')};
  color: ${(p) => (p.$current ? '#fff' : '#444')};
  font-weight: ${(p) => (p.$current ? 'bold' : 'normal')};
  border: solid #c6c6c6;
  border-width: 0 1px 1px 0;
  text-align: center;
`;
const MethodRow = styled.tr`
  background: ${(p) => (p.$tint ? '#e5f3ff' : '#fff')};
  td {
    height: 22px;
    padding-top: 2px;
    padding-bottom: 2px;
  }
`;
const RebarMark = styled.span`
  padding: 0 1px;
  font-size: 10px;
`;
const MethodTools = styled.div`
  flex: none;
  display: flex;
  align-items: center;
  gap: 14px;
  height: 28px;
  padding: 1px 0 0 6px;
  border-bottom: 2px solid ${line};
`;
const AutoLabel = styled.label`
  display: flex;
  align-items: center;
  gap: 4px;
  margin-left: -3px;
`;
const CodeFlex = styled.div`
  display: flex;
  align-items: center;
  gap: 5px;
`;
const FoldButton = styled.button`
  display: flex;
  align-items: center;
  justify-content: center;
  width: 13px;
  height: 13px;
  border: 1px solid #8a8a8a;
  border-radius: 2px;
`;
const ChildBox = styled.div`
  position: relative;
  padding-left: 28px;
`;
const Elbow = styled.i`
  position: absolute;
  top: -16px;
  left: 6px;
  width: 17px;
  height: 25px;
  border: solid #dcdcdc;
  border-width: 0 0 1px 1px;
`;
const Query = styled.section`
  flex: none;
  display: flex;
  flex-direction: column;
  height: 445px;
  background: #fff;
  border: 1px solid ${line};
  border-width: 0 1px;
`;
const Tabs = styled.div`
  flex: none;
  display: flex;
  align-items: flex-end;
  gap: 3px;
  height: 28px;
  border-bottom: 2px solid ${line};
`;
const Tab = styled.button`
  display: flex;
  align-items: center;
  gap: 6px;
  height: 21px;
  margin-bottom: 1px;
  padding: 0 6px;
  background: #dedede;
  border-radius: 2px 2px 0 0;
  ${(p) => p.$active && `
    height: 26px;
    margin-bottom: 0;
    background: #fff;
    border: 1px solid ${line};
    border-bottom: 0;
    color: #1f7fe8;
  `}
`;
const QueryBody = styled.div`
  flex: 1;
  display: flex;
  gap: 5px;
  min-height: 0;
  background: #f0f0f0;
`;
const Chapters = styled.div`
  flex: none;
  display: flex;
  flex-direction: column;
  width: 312px;
  background: #fff;
  border-right: 1px solid ${line};
`;
const ChapterSearch = styled(Field)`
  flex: none;
  height: 26px;
  margin: 1px 9px 1px 2px;
  padding-right: 8px;
`;
const ChapterTree = styled.div`
  flex: 1;
  display: flex;
  flex-direction: column;
  margin-right: 3px;
  padding-left: 1px;
  border-top: 2px solid ${line};
`;
const Quotas = styled.div`
  flex: 1;
  display: flex;
  align-items: flex-start;
  gap: 3px;
  background: #fff;
  border-left: 1px solid ${line};
`;
const Footer = styled.div`
  flex: none;
  display: flex;
  align-items: flex-start;
  gap: 4px;
  height: 22px;
  overflow: hidden;
  padding-left: 6px;
  border-top: 2px solid ${line};
  label { padding-top: 4px; }
`;

export default App;
